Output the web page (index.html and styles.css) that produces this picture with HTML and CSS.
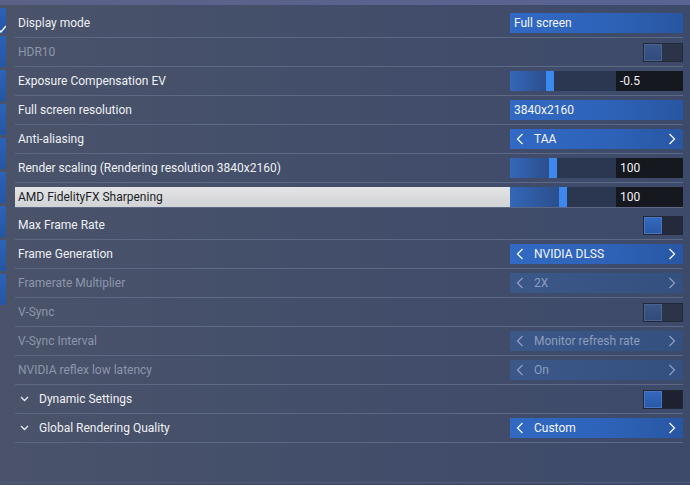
FILE: index.html
```html
<!DOCTYPE html>
<html>
<head>
<meta charset="utf-8">
<link rel="stylesheet" href="styles.css">
</head>
<body>
<div class="topband"></div>
<div class="page">
  <div class="side">
    <div class="seg first"><svg class="check" width="6" height="8" viewBox="0 0 6 8"><path d="M-2 4 L1 7 L6 1" fill="none" stroke="#fff" stroke-width="1.4"/></svg></div>
    <div class="seg"></div><div class="seg"></div><div class="seg"></div><div class="seg"></div>
    <div class="seg"></div><div class="seg"></div><div class="seg"></div><div class="seg"></div>
  </div>
  <div class="list">
    <div class="row"><span class="label">Display mode</span><div class="box blue"><span class="val">Full screen</span></div></div>
    <div class="row dim"><span class="label">HDR10</span><div class="toggle off"><span class="knob"></span></div></div>
    <div class="row"><span class="label">Exposure Compensation EV</span><div class="slider"><div class="track"><span class="fill" style="width:36px"></span><span class="thumb"></span></div><span class="num">-0.5</span></div></div>
    <div class="row"><span class="label">Full screen resolution</span><div class="box blue"><span class="val">3840x2160</span></div></div>
    <div class="row"><span class="label">Anti-aliasing</span><div class="box blue sel"><svg class="arr" width="8" height="12" viewBox="0 0 8 12"><path d="M6.5 1 L1.5 6 L6.5 11" fill="none" stroke="currentColor" stroke-width="1.3"/></svg><span class="val">TAA</span><svg class="arr r" width="8" height="12" viewBox="0 0 8 12"><path d="M1.5 1 L6.5 6 L1.5 11" fill="none" stroke="currentColor" stroke-width="1.3"/></svg></div></div>
    <div class="row"><span class="label">Render scaling (Rendering resolution 3840x2160)</span><div class="slider"><div class="track"><span class="fill" style="width:39px"></span><span class="thumb"></span></div><span class="num">100</span></div></div>
    <div class="row hl"><span class="label">AMD FidelityFX Sharpening</span><div class="slider"><div class="track"><span class="fill" style="width:49px"></span><span class="thumb"></span></div><span class="num">100</span></div></div>
    <div class="row"><span class="label">Max Frame Rate</span><div class="toggle on"><span class="knob"></span></div></div>
    <div class="row"><span class="label">Frame Generation</span><div class="box blue sel"><svg class="arr" width="8" height="12" viewBox="0 0 8 12"><path d="M6.5 1 L1.5 6 L6.5 11" fill="none" stroke="currentColor" stroke-width="1.3"/></svg><span class="val">NVIDIA DLSS</span><svg class="arr r" width="8" height="12" viewBox="0 0 8 12"><path d="M1.5 1 L6.5 6 L1.5 11" fill="none" stroke="currentColor" stroke-width="1.3"/></svg></div></div>
    <div class="row dim"><span class="label">Framerate Multiplier</span><div class="box dimbox sel"><svg class="arr" width="8" height="12" viewBox="0 0 8 12"><path d="M6.5 1 L1.5 6 L6.5 11" fill="none" stroke="currentColor" stroke-width="1.3"/></svg><span class="val">2X</span><svg class="arr r" width="8" height="12" viewBox="0 0 8 12"><path d="M1.5 1 L6.5 6 L1.5 11" fill="none" stroke="currentColor" stroke-width="1.3"/></svg></div></div>
    <div class="row dim"><span class="label">V-Sync</span><div class="toggle off"><span class="knob"></span></div></div>
    <div class="row dim"><span class="label">V-Sync Interval</span><div class="box dimbox sel"><svg class="arr" width="8" height="12" viewBox="0 0 8 12"><path d="M6.5 1 L1.5 6 L6.5 11" fill="none" stroke="currentColor" stroke-width="1.3"/></svg><span class="val">Monitor refresh rate</span><svg class="arr r" width="8" height="12" viewBox="0 0 8 12"><path d="M1.5 1 L6.5 6 L1.5 11" fill="none" stroke="currentColor" stroke-width="1.3"/></svg></div></div>
    <div class="row dim"><span class="label">NVIDIA reflex low latency</span><div class="box dimbox sel"><svg class="arr" width="8" height="12" viewBox="0 0 8 12"><path d="M6.5 1 L1.5 6 L6.5 11" fill="none" stroke="currentColor" stroke-width="1.3"/></svg><span class="val">On</span><svg class="arr r" width="8" height="12" viewBox="0 0 8 12"><path d="M1.5 1 L6.5 6 L1.5 11" fill="none" stroke="currentColor" stroke-width="1.3"/></svg></div></div>
    <div class="row"><span class="label"><svg class="chev" width="9" height="6" viewBox="0 0 9 6"><path d="M1 1 L4.5 4.5 L8 1" fill="none" stroke="#e8ecf4" stroke-width="1.3"/></svg>Dynamic Settings</span><div class="toggle on dark"><span class="knob"></span></div></div>
    <div class="row"><span class="label"><svg class="chev" width="9" height="6" viewBox="0 0 9 6"><path d="M1 1 L4.5 4.5 L8 1" fill="none" stroke="#e8ecf4" stroke-width="1.3"/></svg>Global Rendering Quality</span><div class="box blue sel"><svg class="arr" width="8" height="12" viewBox="0 0 8 12"><path d="M6.5 1 L1.5 6 L6.5 11" fill="none" stroke="currentColor" stroke-width="1.3"/></svg><span class="val">Custom</span><svg class="arr r" width="8" height="12" viewBox="0 0 8 12"><path d="M1.5 1 L6.5 6 L1.5 11" fill="none" stroke="currentColor" stroke-width="1.3"/></svg></div></div>
  </div>
</div>
<div class="bottomline"></div>
</body>
</html>
```
FILE: styles.css
```css
html, body {
  margin: 0;
  padding: 0;
}
body {
  width: 690px;
  height: 485px;
  overflow: hidden;
  position: relative;
  font-family: Roboto, "Liberation Sans", sans-serif;
  font-size: 12px;
  color: #eef0f5;
  background: linear-gradient(to right, #4a5369 0%, #434e6a 45%, #3d4a6a 100%);
}
.topband {
  height: 5px;
  background: linear-gradient(to right, #5b6186, #5a6494);
}
.page {
  display: flex;
  padding-top: 3px;
}
.side {
  width: 15px;
  display: flex;
  flex-direction: column;
  gap: 3px;
}
.seg {
  width: 6px;
  height: 31px;
  background: linear-gradient(to bottom, #2c62b8, #2556a3);
}
.seg.first {
  height: 25px;
  position: relative;
}
.check {
  position: absolute;
  left: 0;
  top: 17px;
}
.list {
  width: 668px;
  padding-top: 1px;
}
.row {
  height: 28px;
  border-bottom: 1px solid #5d6884;
  display: flex;
  align-items: center;
  justify-content: space-between;
}
.label {
  padding-left: 3px;
  display: flex;
  align-items: center;
  white-space: nowrap;
}
.row.dim .label {
  color: #8d96ab;
}
.row.hl {
  background: linear-gradient(to bottom, #e4e4e6, #d2d3d6);
  height: 20px;
  margin: 4px 0 3px;
  border-bottom: 1px solid #5d6884;
}
.row.hl .label {
  color: #1b1e26;
}
.chev {
  margin: 0 10px 0 2px;
}
.box {
  width: 173px;
  height: 20px;
  display: flex;
  align-items: center;
  box-sizing: border-box;
  padding-left: 4px;
}
.box.blue {
  background: linear-gradient(to right, #3169c3 0%, #2d62b7 60%, #2856a2 100%);
  color: #f4f6fa;
}
.box.dimbox {
  background: linear-gradient(to right, #3b5889, #33507f);
  color: #8d9dbb;
}
.box.sel {
  padding-left: 6px;
}
.box.sel .val {
  flex: 1;
  padding-left: 10px;
}
.arr {
  display: block;
}
.arr.r {
  margin-right: 7px;
}
.slider {
  width: 173px;
  height: 20px;
  display: flex;
}
.track {
  flex: 1;
  display: flex;
  background: #2b3751;
}
.fill {
  height: 20px;
  background: linear-gradient(to right, #3467b8, #2b4f8c);
}
.thumb {
  width: 8px;
  height: 20px;
  background: #3d88ee;
}
.num {
  width: 63px;
  padding-left: 4px;
  background: #15181f;
  color: #f2f3f6;
  line-height: 20px;
}
.toggle {
  width: 40px;
  height: 19px;
  box-sizing: border-box;
  border: 1px solid #222838;
  display: flex;
  background: #2c3448;
}
.knob {
  width: 18px;
  height: 17px;
  box-sizing: border-box;
  border: 1px solid #3f5f93;
  background: linear-gradient(to bottom, #3a5a8c, #30508a);
}
.toggle.on {
  background: #242a3a;
}
.toggle.on .knob {
  border-color: #4877c0;
  background: linear-gradient(to bottom, #3369be, #2a58a6);
}
.toggle.dark {
  background: #1e2230;
}
.toggle.off .knob {
  border-color: #4a628e;
  background: linear-gradient(to bottom, #3a5687, #314c7b);
}
.bottomline {
  position: absolute;
  left: 0;
  right: 0;
  bottom: 2px;
  height: 1px;
  background: #505a74;
}
```
